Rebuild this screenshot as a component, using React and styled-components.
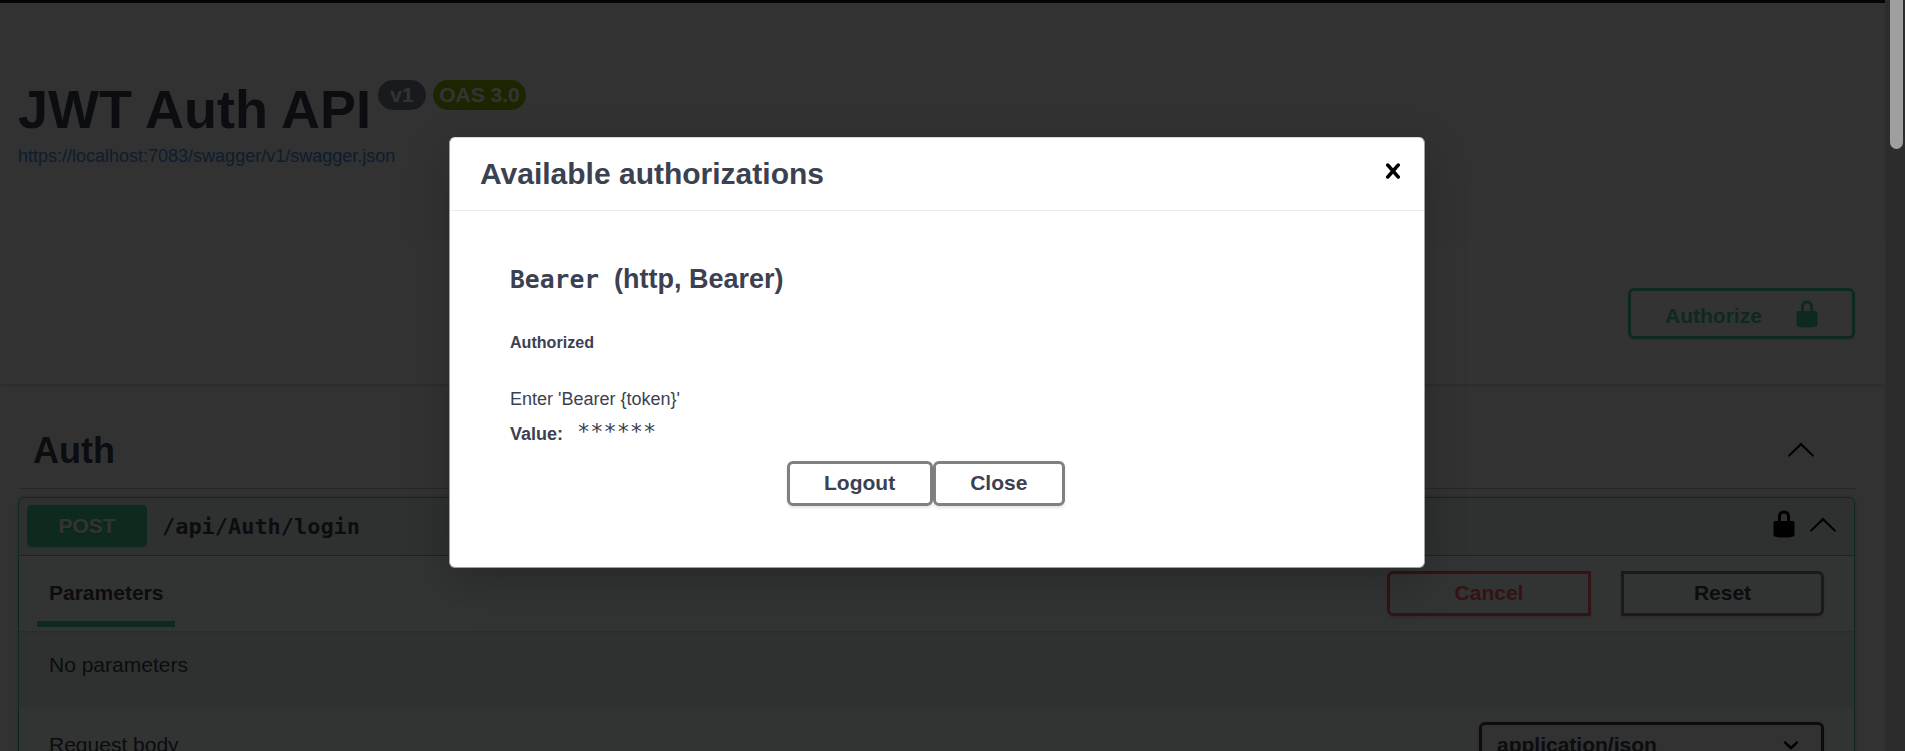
import React from "react";
import styled, { createGlobalStyle } from "styled-components";

const sans = `"Liberation Sans", Arial, sans-serif`;
const mono = `"DejaVu Sans Mono", monospace`;
const green = "#49cc90";
const ink = "#3b4151";

const GlobalStyle = createGlobalStyle`
  *, *::before, *::after { box-sizing: border-box; }
  html, body { margin: 0; height: 751px; overflow: hidden; background: #2c2c2c; }
  h1, h2, h3, h4, h6, p { margin: 0; }
  button { font-family: ${sans}; }
`;

const Window = styled.div`
  display: flex;
  width: 1905px;
  height: 751px;
  overflow: hidden;
  font-family: ${sans};
  color: ${ink};
`;

const Page = styled.main`
  position: relative;
  width: 1885px;
  height: 751px;
  overflow: hidden;
  background: #fafafa;
`;

const ScrollTrack = styled.div`
  width: 20px;
  padding-left: 5px;
  background: #2c2c2c;
`;

const ScrollThumb = styled.div`
  width: 13px;
  height: 149px;
  border-radius: 0 0 7px 7px;
  background: #9f9f9f;
`;

const TopBar = styled.div`
  height: 3px;
  background: #1b1b1b;
`;

const Info = styled.header`
  height: 238px;
  padding: 75px 18px 0;
`;

const TitleRow = styled.div`
  display: flex;
  align-items: flex-start;
  height: 62px;
`;

const Title = styled.h1`
  width: 360px;
  font-size: 54px;
  line-height: 62px;
  white-space: nowrap;
`;

const Badge = styled.span`
  width: ${(p) => p.$width}px;
  height: 30px;
  margin: 2px 7px 0 0;
  border-radius: 15px;
  background: ${(p) => p.$color};
  color: #fff;
  font-size: 21px;
  font-weight: 700;
  line-height: 29px;
  text-align: center;
`;

const SpecLink = styled.a`
  display: block;
  margin-top: 6px;
  color: #4990e2;
  font-size: 18px;
  line-height: 20px;
`;

const SchemeBar = styled.section`
  display: flex;
  justify-content: flex-end;
  height: 143px;
  padding: 47px 30px 0;
  background: #fff;
  box-shadow: 0 1.5px 3px rgba(0, 0, 0, 0.15);
`;

const Button = styled.button`
  height: 45px;
  width: ${(p) => (p.$width ? `${p.$width}px` : "auto")};
  padding: 0 34.5px 2px;
  border: 3px solid ${(p) => p.$border || "gray"};
  border-radius: ${(p) => p.$radius || "6px"};
  background: transparent;
  box-shadow: 0 1.5px 3px rgba(0, 0, 0, 0.1);
  color: ${(p) => p.$color || ink};
  font-size: 21px;
  font-weight: 700;
  line-height: 36px;
`;

const AuthorizeButton = styled(Button)`
  display: flex;
  align-items: flex-start;
  justify-content: space-between;
  width: 227px;
  height: 51px;
  padding: 8px 30px 0 34px;

  span { line-height: 34px; }
`;

const Tag = styled.section`
  padding: 0 30px 0 18px;
`;

const TagHeader = styled.div`
  display: flex;
  align-items: center;
  justify-content: space-between;
  height: 105px;
  margin-bottom: 8px;
  padding: 25px 39px 0 15px;
  border-bottom: 1px solid rgba(59, 65, 81, 0.3);
`;

const TagTitle = styled.h3`
  padding-top: 5px;
  font-size: 36px;
  line-height: 42px;
`;

const Operation = styled.article`
  height: 400px;
  border: 1px solid ${green};
  border-radius: 6px;
  background: rgba(73, 204, 144, 0.1);
  box-shadow: 0 0 4px rgba(0, 0, 0, 0.19);
`;

const Summary = styled.div`
  display: flex;
  align-items: center;
  height: 58px;
  padding: 0 16px 1px 8px;
  border-bottom: 1px solid ${green};
`;

const Method = styled.span`
  width: 120px;
  height: 42px;
  margin-right: 15px;
  border-radius: 4.5px;
  background: ${green};
  color: #fff;
  font-size: 21px;
  font-weight: 700;
  line-height: 42px;
  text-align: center;
  text-shadow: 0 1.5px 0 rgba(0, 0, 0, 0.1);
`;

const Path = styled.span`
  flex: 1;
  padding-top: 1px;
  font: 700 21.93px/30px ${mono};
`;

const Icons = styled.div`
  display: flex;
  gap: 9px;
  margin-top: -4px;
`;

const SectionHeader = styled.div`
  display: flex;
  justify-content: space-between;
  height: 75px;
  padding: 15px 30px 0 18px;
  background: rgba(255, 255, 255, 0.8);
  box-shadow: 0 1.5px 3px rgba(0, 0, 0, 0.1);
`;

const Tab = styled.h4`
  width: 138px;
  height: 56px;
  padding-left: 12px;
  border-bottom: 6px solid ${green};
  font-size: 21px;
  line-height: 44px;
`;

const ButtonPair = styled.div`
  display: flex;
  gap: 30px;
`;

const Empty = styled.p`
  height: 76px;
  padding: 22px 30px 0;
  font-size: 21px;
  line-height: 24px;
`;

const BodyHeader = styled(SectionHeader)`
  height: 90px;
  padding-left: 30px;
`;

const BodyLabel = styled.h4`
  font-size: 21px;
  font-weight: 400;
  line-height: 46px;
`;

const Select = styled.div`
  display: flex;
  align-items: center;
  justify-content: space-between;
  width: 345px;
  height: 60px;
  padding: 0 15px 15px 15px;
  border: 3px solid #41444e;
  border-radius: 6px;
  background: #f7f7f7;
  box-shadow: 0 1.5px 3px rgba(0, 0, 0, 0.25);
  font-size: 21px;
  font-weight: 700;

  svg {
    color: #000;
    stroke: #000;
    stroke-width: 0.3;
  }
`;

const Backdrop = styled.div`
  position: absolute;
  inset: 0;
  padding: 137px 0 0 449px;
  background: rgba(0, 0, 0, 0.8);
`;

const Modal = styled.div`
  width: 976px;
  height: 431px;
  border: 1px solid #a0a0a0;
  border-top-color: #d8d8d8;
  border-radius: 6px;
  background: #fff;
  box-shadow: 0 15px 45px rgba(0, 0, 0, 0.2);
`;

const ModalHeader = styled.div`
  display: flex;
  align-items: center;
  justify-content: space-between;
  height: 73px;
  padding: 0 16px 0 30px;
  border-bottom: 1px solid #ebebeb;
`;

const ModalTitle = styled.h2`
  margin-top: -1px;
  font-size: 30px;
  line-height: 34px;
`;

const CloseSlot = styled.span`
  display: flex;
  margin-top: -6px;
`;

const ModalBody = styled.div`
  padding: 52px 60px 0;
`;

const SchemeName = styled.h3`
  display: flex;
  align-items: baseline;
  font-size: 27px;
  line-height: 32px;
`;

const SchemeCode = styled.code`
  width: 104px;
  font: 700 24.67px/32px ${mono};
`;

const Status = styled.h6`
  margin-top: 36px;
  font-size: 16.08px;
  line-height: 20px;
`;

const Hint = styled.p`
  margin-top: 36px;
  font-size: 18px;
  line-height: 22px;
`;

const ValueRow = styled.div`
  display: flex;
  align-items: flex-start;
  height: 35px;
  margin-top: 13px;
  font-size: 18px;
  font-weight: 700;
  line-height: 22px;
`;

const Secret = styled.code`
  margin: -2px 0 0 14px;
  font: 400 21.93px/22px ${mono};
`;

const ModalActions = styled.div`
  display: flex;
  margin: 3px 0 0 276.5px;
`;

const Svg = ({ d, size = 30 }) => (
  <svg width={size} height={size} viewBox="0 0 20 20" fill="currentColor" aria-hidden="true">
    <path d={d} />
  </svg>
);

const LOCK =
  "M15.8 8H14V5.6C14 2.703 12.665 1 10 1 7.334 1 6 2.703 6 5.6V8H4c-.553 0-1 .646-1 1.199V17c0 .549.428 1.139.951 1.307l1.197.387C5.672 18.861 6.55 19 7.1 19h5.8c.549 0 1.428-.139 1.951-.307l1.196-.387c.524-.167.953-.757.953-1.306V9.199C17 8.646 16.352 8 15.8 8zM12 8H8V5.199C8 3.754 8.797 3 10 3c1.203 0 2 .754 2 2.199V8z";
const ARROW_UP =
  "M17.418 14.908c.272.268.709.268.979 0s.271-.701 0-.969l-7.908-7.83c-.27-.268-.707-.268-.979 0l-7.908 7.83c-.27.268-.27.701 0 .969.271.268.709.268.979 0L10 7.767l7.418 7.141z";
const SELECT_ARROW =
  "M13.418 7.859c.271-.268.709-.268.978 0 .27.268.272.701 0 .969l-3.908 3.83c-.27.268-.707.268-.979 0l-3.908-3.83c-.27-.267-.27-.701 0-.969.271-.268.709-.268.978 0L10 11l3.418-3.141z";
const CROSS =
  "M14.348 14.849c-.469.469-1.229.469-1.697 0L10 11.819l-2.651 3.029c-.469.469-1.229.469-1.697 0-.469-.469-.469-1.229 0-1.697l2.758-3.15-2.759-3.152c-.469-.469-.469-1.228 0-1.697.469-.469 1.228-.469 1.697 0L10 8.183l2.651-3.031c.469-.469 1.228-.469 1.697 0 .469.469.469 1.229 0 1.697l-2.758 3.152 2.758 3.15c.469.469.469 1.229 0 1.698z";

const IconBox = styled.span`
  display: flex;
  color: #000;
`;

export default function App() {
  return (
    <Window>
      <GlobalStyle />
      <Page>
        <TopBar />
        <Info>
          <TitleRow>
            <Title>JWT Auth API</Title>
            <Badge $width={48} $color="#7d8492">v1</Badge>
            <Badge $width={93} $color="#89bf04">OAS 3.0</Badge>
          </TitleRow>
          <SpecLink>https://localhost:7083/swagger/v1/swagger.json</SpecLink>
        </Info>
        <SchemeBar>
          <AuthorizeButton $border={green} $color={green}>
            <span>Authorize</span>
            <Svg d={LOCK} />
          </AuthorizeButton>
        </SchemeBar>
        <Tag>
          <TagHeader>
            <TagTitle>Auth</TagTitle>
            <IconBox><Svg d={ARROW_UP} /></IconBox>
          </TagHeader>
          <Operation>
            <Summary>
              <Method>POST</Method>
              <Path>/api/Auth/login</Path>
              <Icons>
                <IconBox><Svg d={LOCK} /></IconBox>
                <IconBox><Svg d={ARROW_UP} /></IconBox>
              </Icons>
            </Summary>
            <SectionHeader>
              <Tab>Parameters</Tab>
              <ButtonPair>
                <Button $width={204} $border="#ff6060" $color="#ff6060" $radius="6px 0 0 6px">Cancel</Button>
                <Button $width={203} $radius="0 6px 6px 0">Reset</Button>
              </ButtonPair>
            </SectionHeader>
            <Empty>No parameters</Empty>
            <BodyHeader>
              <BodyLabel>Request body</BodyLabel>
              <Select>
                application/json
                <Svg d={SELECT_ARROW} size={30} />
              </Select>
            </BodyHeader>
          </Operation>
        </Tag>
        <Backdrop>
          <Modal>
            <ModalHeader>
              <ModalTitle>Available authorizations</ModalTitle>
              <CloseSlot>
                <IconBox><Svg d={CROSS} /></IconBox>
              </CloseSlot>
            </ModalHeader>
            <ModalBody>
              <SchemeName>
                <SchemeCode>Bearer</SchemeCode>
                (http, Bearer)
              </SchemeName>
              <Status>Authorized</Status>
              <Hint>Enter 'Bearer {"{token}"}'</Hint>
              <ValueRow>
                Value:
                <Secret>******</Secret>
              </ValueRow>
              <ModalActions>
                <Button>Logout</Button>
                <Button>Close</Button>
              </ModalActions>
            </ModalBody>
          </Modal>
        </Backdrop>
      </Page>
      <ScrollTrack>
        <ScrollThumb />
      </ScrollTrack>
    </Window>
  );
}
